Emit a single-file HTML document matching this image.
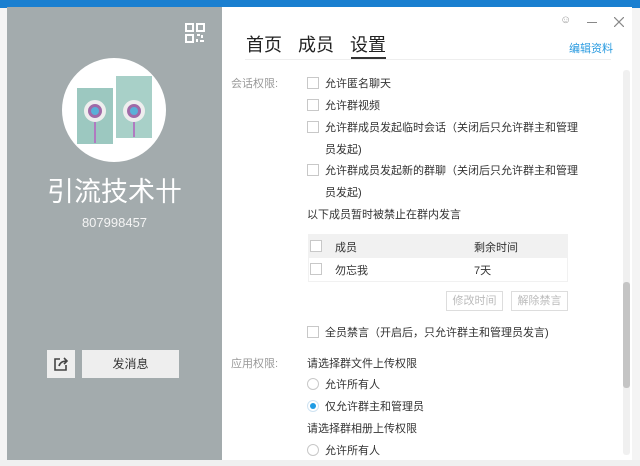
<!DOCTYPE html>
<html><head><meta charset="utf-8"><style>
*{margin:0;padding:0;box-sizing:border-box}
body{width:640px;height:466px;overflow:hidden;position:relative;background:#e9ecef;font-family:"Liberation Sans","Noto Sans CJK SC",sans-serif;font-size:11px;color:#333}
.a{position:absolute}
.cb{position:absolute;width:12px;height:12px;border:1px solid #c8c8c8;background:#fff}
.rd{position:absolute;width:12px;height:12px;border:1px solid #c8c8c8;border-radius:50%;background:#fff}
.t{position:absolute;white-space:nowrap;font-size:11px;color:#333}
</style></head><body>
<div class="a" style="left:0;top:0;width:640px;height:8px;background:#1a7fd0"></div>
<div class="a" style="left:0;top:8px;width:7px;height:458px;background:#f4f4f4"></div>
<div class="a" style="left:632px;top:8px;width:8px;height:458px;background:#f4f4f4"></div>
<div class="a" style="left:0;top:460px;width:640px;height:6px;background:#f0f0f0"></div>
<div class="a" style="left:7px;top:7px;width:215px;height:453px;background:#a3abad"></div>
<svg class="a" style="left:185px;top:23px" width="20" height="20" viewBox="0 0 20 20" fill="none" stroke="#fff" stroke-width="2"><rect x="1" y="1" width="7" height="7"/><rect x="12" y="1" width="7" height="7"/><rect x="1" y="12" width="7" height="7"/><path d="M12 12h3M17 12v3M12 16v3M15 18h4" /></svg>
<div class="a" style="left:62px;top:58px;width:104px;height:104px;border-radius:50%;background:#fff;overflow:hidden">
<div class="a" style="left:15px;top:30px;width:36px;height:56px;background:#9cc8c0"></div>
<div class="a" style="left:54px;top:18px;width:36px;height:62px;background:#a8d0c8"></div>
<div class="a" style="left:32px;top:55px;width:2px;height:30px;background:#b07ac0"></div>
<div class="a" style="left:71px;top:55px;width:2px;height:24px;background:#b07ac0"></div>
<div class="a" style="left:22px;top:42px;width:22px;height:22px;border-radius:50%;background:#a06aa8;border:4px solid #eee"></div>
<div class="a" style="left:61px;top:42px;width:22px;height:22px;border-radius:50%;background:#a06aa8;border:4px solid #eee"></div>
<div class="a" style="left:29px;top:49px;width:8px;height:8px;border-radius:50%;background:#5ab0d8"></div>
<div class="a" style="left:68px;top:49px;width:8px;height:8px;border-radius:50%;background:#5ab0d8"></div>
</div>
<div class="a" style="left:7px;top:174px;width:215px;text-align:center;color:#fff;font-size:27px;line-height:36px">引流技术<span style="font-family:'Liberation Sans',sans-serif">卄</span></div>
<div class="a" style="left:7px;top:215px;width:215px;text-align:center;color:#f4f4f4;font-size:13px">807998457</div>
<div class="a" style="left:47px;top:350px;width:28px;height:28px;background:#eeeeee"></div>
<svg class="a" style="left:53px;top:356px" width="16" height="16" viewBox="0 0 16 16" fill="none" stroke="#444" stroke-width="1.6"><path d="M7 3H2v11h11V9"/><path d="M6 10c1-4 4-5 8-5M11 2l3 3-3 3"/></svg>
<div class="a" style="left:82px;top:350px;width:97px;height:28px;background:#eeeeee;text-align:center;line-height:28px;font-size:12px;color:#333">发消息</div>
<div class="a" style="left:222px;top:7px;width:410px;height:453px;background:#fff"></div>
<div class="t" style="left:560px;top:14px;color:#999;font-size:11px">☺</div>
<div class="a" style="left:587px;top:22px;width:10px;height:1px;background:#888"></div>
<svg class="a" style="left:614px;top:17px" width="10" height="10" viewBox="0 0 10 10" stroke="#888" stroke-width="1.2"><path d="M0 0L10 10M10 0L0 10"/></svg>
<div class="t" style="left:246px;top:31px;font-size:18px;color:#222">首页</div>
<div class="t" style="left:298px;top:31px;font-size:18px;color:#222">成员</div>
<div class="t" style="left:350px;top:31px;font-size:18px;color:#222">设置</div>
<div class="a" style="left:351px;top:57px;width:35px;height:2px;background:#333"></div>
<div class="a" style="left:245px;top:59px;width:366px;height:1px;background:#eee"></div>
<div class="t" style="left:569px;top:40px;color:#2a9be0">编辑资料</div>
<div class="a" style="left:623px;top:70px;width:7px;height:385px;background:#f0f0f0;border-radius:3px"></div>
<div class="a" style="left:623px;top:282px;width:7px;height:106px;background:#c4c4c4;border-radius:3px"></div>
<div class="t" style="left:231px;top:75px;color:#999">会话权限:</div>
<div class="cb" style="left:307px;top:77px"></div><div class="t" style="left:325px;top:75px">允许匿名聊天</div>
<div class="cb" style="left:307px;top:99px"></div><div class="t" style="left:325px;top:97px">允许群视频</div>
<div class="cb" style="left:307px;top:121px"></div><div class="t" style="left:325px;top:119px">允许群成员发起临时会话（关闭后只允许群主和管理</div>
<div class="t" style="left:325px;top:141px">员发起)</div>
<div class="cb" style="left:307px;top:164px"></div><div class="t" style="left:325px;top:162px">允许群成员发起新的群聊（关闭后只允许群主和管理</div>
<div class="t" style="left:325px;top:184px">员发起)</div>
<div class="t" style="left:307px;top:206px">以下成员暂时被禁止在群内发言</div>
<div class="a" style="left:308px;top:234px;width:260px;height:24px;background:#f1f1f1"></div>
<div class="a" style="left:308px;top:258px;width:260px;height:24px;border:1px solid #f1f1f1;border-top:none"></div>
<div class="cb" style="left:310px;top:240px"></div><div class="t" style="left:335px;top:239px">成员</div><div class="t" style="left:474px;top:239px">剩余时间</div>
<div class="cb" style="left:310px;top:263px"></div><div class="t" style="left:335px;top:262px">勿忘我</div><div class="t" style="left:474px;top:262px">7天</div>
<div class="a" style="left:446px;top:291px;width:57px;height:20px;border:1px solid #ddd;color:#bbb;text-align:center;line-height:18px">修改时间</div>
<div class="a" style="left:511px;top:291px;width:57px;height:20px;border:1px solid #ddd;color:#bbb;text-align:center;line-height:18px">解除禁言</div>
<div class="cb" style="left:307px;top:326px"></div><div class="t" style="left:325px;top:324px">全员禁言（开启后，只允许群主和管理员发言)</div>
<div class="t" style="left:231px;top:355px;color:#999">应用权限:</div>
<div class="t" style="left:307px;top:355px">请选择群文件上传权限</div>
<div class="rd" style="left:307px;top:378px"></div><div class="t" style="left:325px;top:376px">允许所有人</div>
<div class="rd" style="left:307px;top:400px;border-color:#cfe3f2"></div><div class="a" style="left:310px;top:403px;width:6px;height:6px;border-radius:50%;background:#1e9be4"></div><div class="t" style="left:325px;top:398px">仅允许群主和管理员</div>
<div class="t" style="left:307px;top:420px">请选择群相册上传权限</div>
<div class="rd" style="left:307px;top:444px"></div><div class="t" style="left:325px;top:442px">允许所有人</div>
</body></html>
